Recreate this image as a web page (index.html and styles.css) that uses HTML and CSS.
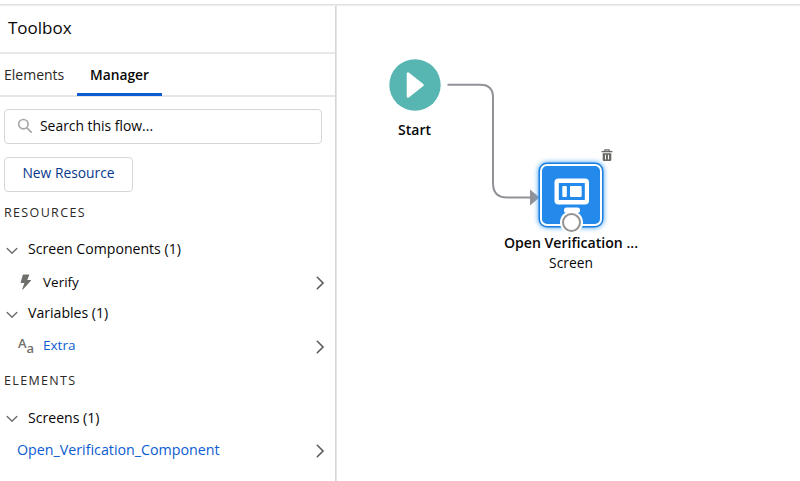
FILE: index.html
```html
<!DOCTYPE html>
<html lang="en">
<head>
<meta charset="utf-8">
<title>Toolbox</title>
<link rel="stylesheet" href="styles.css">
</head>
<body>
<div class="builder">
  <aside class="toolbox">
    <h1 class="title"><span>Toolbox</span></h1>
    <nav class="tabs">
      <a class="tab tab-elements"><span>Elements</span></a>
      <a class="tab tab-manager active"><span>Manager</span></a>
    </nav>
    <div class="content">
      <div class="search">
        <svg width="16" height="16" viewBox="0 0 16 16"><circle cx="6.4" cy="6.2" r="4.7"/><path d="M9.9 9.8l4.3 4.3"/></svg>
        <span class="t-search">Search this flow...</span>
      </div>
      <button class="new"><span>New Resource</span></button>
      <h2 class="section"><span>RESOURCES</span></h2>
      <div class="row group">
        <svg class="down" width="12" height="8" viewBox="0 0 12 8"><path d="M1.2 1.4l4.8 4.9 4.8-4.9"/></svg>
        <span class="t-sc">Screen Components (1)</span>
      </div>
      <div class="row item verify">
        <svg class="type" width="18" height="18" viewBox="0 0 18 18"><path d="M6.3 1.5h6.1L10.3 7h3.3c.5 0 .6.4.3.8l-8 8.700c-.4.4-.8.1-.6-.4L7.400 10H4.200c-.5 0-.7-.3-.5-.8l2-7c.1-.4.2-.7.6-.7z"/></svg>
        <span class="t-verify">Verify</span>
        <svg class="next" width="9" height="14" viewBox="0 0 9 14"><path d="M1.3 1.3L7 7l-5.700 5.700"/></svg>
      </div>
      <div class="row group">
        <svg class="down" width="12" height="8" viewBox="0 0 12 8"><path d="M1.2 1.4l4.8 4.9 4.8-4.9"/></svg>
        <span class="t-var">Variables (1)</span>
      </div>
      <div class="row item extra">
        <span class="type letters"><b>A</b><i>a</i></span>
        <span class="link t-extra">Extra</span>
        <svg class="next" width="9" height="14" viewBox="0 0 9 14"><path d="M1.3 1.3L7 7l-5.700 5.700"/></svg>
      </div>
      <h2 class="section second"><span>ELEMENTS</span></h2>
      <div class="row group">
        <svg class="down" width="12" height="8" viewBox="0 0 12 8"><path d="M1.2 1.4l4.8 4.9 4.8-4.9"/></svg>
        <span class="t-screens">Screens (1)</span>
      </div>
      <div class="row item plain">
        <span class="link t-open">Open_Verification_Component</span>
        <svg class="next" width="9" height="14" viewBox="0 0 9 14"><path d="M1.3 1.3L7 7l-5.700 5.700"/></svg>
      </div>
    </div>
  </aside>
  <main class="canvas">
    <svg class="connector" width="100" height="130" viewBox="0 0 100 130">
      <path class="wire" d="M7.5 4.700h33Q53 4.700 53 17.500V103Q53 117.500 67 117.500H91"/>
      <path class="arrow" d="M90 109.500l9.500 8-9.500 8z"/>
    </svg>
    <div class="node start">
      <svg width="52" height="52" viewBox="0 0 52 52"><circle cx="26" cy="26" r="25.700" fill="#58b6b2"/><path d="M19 14.500v23l14.500-11.500z" fill="#fff" stroke="#fff" stroke-width="2.500" stroke-linejoin="round"/></svg>
      <span class="name t-start">Start</span>
    </div>
    <svg class="trash" width="12" height="13" viewBox="0 0 12 13"><path d="M.6 2.600h10.800" stroke="#6b6966" stroke-width="1.400"/><path d="M3.900 2.400V.8h4.200v1.600" fill="none" stroke="#6b6966" stroke-width="1.200"/><path d="M1.700 4.300h8.600v6.500q0 1.200-1.200 1.200H2.900q-1.200 0-1.200-1.200z" fill="#6b6966"/><path d="M4.500 5.900v4.500M7.500 5.900v4.500" stroke="#fff" stroke-width="1"/></svg>
    <div class="node screen">
      <div class="tile">
        <svg width="60" height="60" viewBox="0 0 60 60"><rect x="13.500" y="13.500" width="34.500" height="26" rx="4" fill="#fff"/><rect x="17.800" y="18" width="26" height="17" fill="#238aec"/><rect x="21.300" y="21" width="4.500" height="11" rx="1" fill="#fff"/><rect x="29" y="21" width="11.700" height="11" rx="1" fill="#fff"/><rect x="23" y="42.500" width="16" height="5.500" rx="2.500" fill="#fff"/></svg>
        <i class="port"></i>
      </div>
      <span class="name t-name">Open Verification ...</span>
      <span class="kind t-kind">Screen</span>
    </div>
  </main>
</div>
</body>
</html>
```
FILE: styles.css
```css
* { box-sizing: border-box; }
body { margin: 0; background: #fff; color: #080707; font: 13.5px/20px "Open Sans", "Noto Sans", sans-serif; overflow: hidden; }
svg { display: block; flex: none; }
.builder { display: flex; height: 477px; margin-top: 4px; border-top: 1px solid #e0e0e0; padding-top: 1px; box-shadow: inset 0 1px #ededed; }
.toolbox { width: 336px; margin-right: 1px; flex: none; border-right: 1px solid #d6d6d6; box-shadow: 1px 0 #e6e6e6; }
.title { margin: 0; height: 48px; padding: 0 8px 3px; display: flex; align-items: center; font-size: 17px; font-weight: 400; border-bottom: 2px solid #e8e8e8; }
.tabs { height: 43px; display: flex; border-bottom: 2px solid #e5e5e5; padding-left: 4px; gap: 13px; }
.tab { height: 43px; line-height: 41px; width: 60px; white-space: nowrap; color: #2b2826; font-size: 14px; }
.tab.active { width: 85px; text-align: center; font-weight: 600; color: #080707; border-bottom: 3px solid #0b5cd0; height: 42px; font-size: 13.8px; }
.content { padding: 12px 11px 0 4px; }
.search { width: 318px; height: 35px; display: flex; align-items: center; gap: 7px; padding: 0 0 2px 12px; border: 1px solid #d8d6d5; border-radius: 4px; white-space: nowrap; font-size: 13.9px; }
.search svg { fill: none; stroke: #aaa8a6; stroke-width: 1.7; stroke-linecap: round; margin-top: 1px; }
.new { display: block; width: 129px; height: 35px; margin-top: 13px; padding: 0 0 3px; border: 1px solid #d8d6d5; border-radius: 4px; background: #fff; color: #08388c; font: inherit; font-size: 13.8px; white-space: nowrap; }
.section { margin: 10px 0 0; height: 22px; font-size: 12.5px; line-height: 22px; font-weight: 400; color: #2b2826; letter-spacing: 1.35px; }
.section.second { margin-top: 8px; }
.row { display: flex; align-items: center; height: 32px; white-space: nowrap; }
.row > span { margin-top: -2px; }
.section + .row { margin-top: 10px; }
.group { padding-left: 2px; gap: 10px; font-size: 14.1px; }
.down { fill: none; stroke: #706e6b; stroke-width: 1.4; stroke-linecap: round; margin-top: 2px; }
.item { padding-left: 13px; }
.verify > .t-verify, .second ~ .row > span { margin-top: 0; }
.type { width: 18px; margin-right: 8px; fill: #706e6b; color: #706e6b; }
.row > .letters { display: flex; height: 18px; line-height: 12px; padding-left: 1px; margin-top: -1px; }
.letters b { font-weight: 600; font-size: 13px; }
.letters i { font-style: normal; font-weight: 600; font-size: 13px; margin-top: 5px; }
.link { color: #0b5cd0; }
.t-open { font-size: 14.25px; }
.next { margin-left: auto; margin-right: -1px; margin-top: 2px; fill: none; stroke: #5c5a57; stroke-width: 1.6; stroke-linecap: round; }
.canvas { flex: 1; position: relative; }
.connector { position: absolute; left: 103px; top: 74px; fill: none; }
.wire { stroke: #919297; stroke-width: 2; }
.arrow { fill: #919297; }
.node { position: absolute; display: flex; flex-direction: column; align-items: center; white-space: nowrap; }
.start { left: 51.5px; top: 53px; width: 52px; }
.name { font-weight: 600; font-size: 14px; }
.start .name { margin-top: 9px; }
.trash { position: absolute; left: 263.5px; top: 142.5px; }
.screen { left: 154px; top: 157px; width: 160px; }
.tile { position: relative; width: 62px; height: 62px; margin-top: 1px; border: 2px solid #fff; border-radius: 7px; background: #238aec; box-shadow: 0 0 0 1.5px #1b7fe0, 0 0 5px 2px #58aaf4; }
.tile svg { margin: -1px; }
.port { position: absolute; left: 20px; top: 47px; width: 19px; height: 19px; border: 2px solid #969492; border-radius: 50%; background: #fff; box-shadow: 0 0 0 2px #fff; }
.screen .name { margin-top: 7px; font-size: 14.1px; }
.kind { font-size: 13.8px; }
```
